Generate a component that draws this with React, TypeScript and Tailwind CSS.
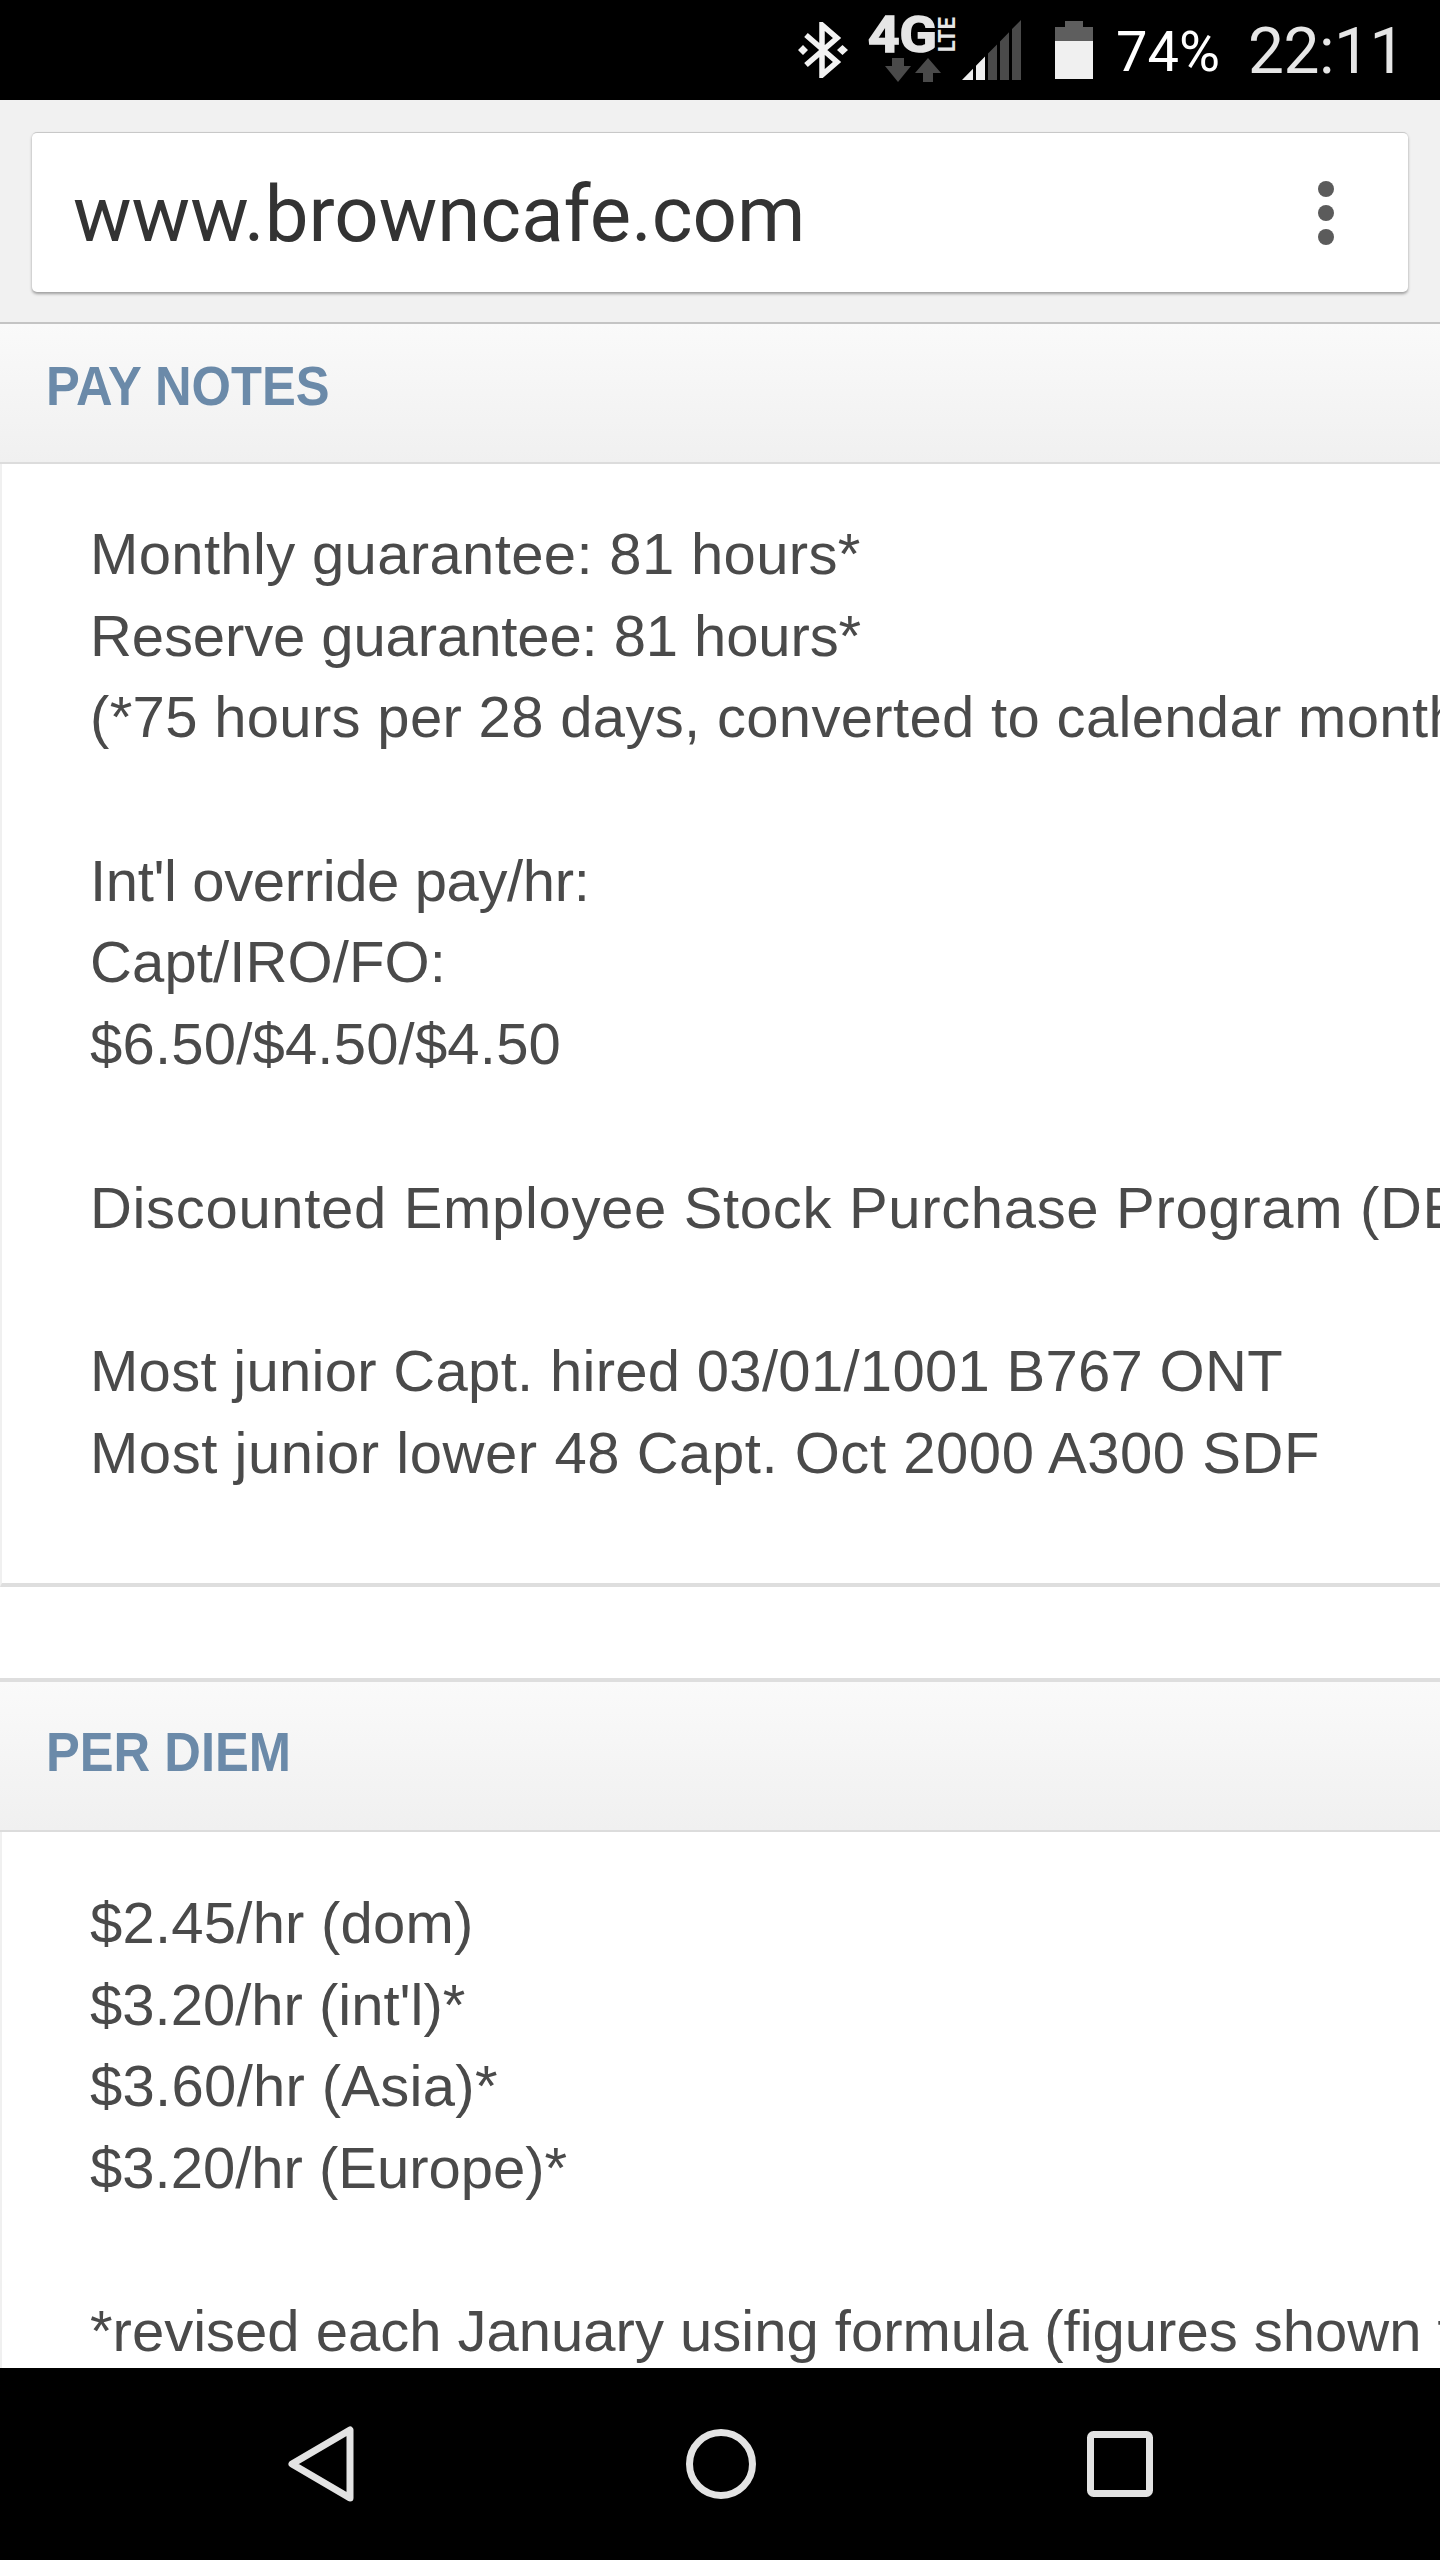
type Line = { text: string; track?: string };

function Bluetooth() {
  return (
    <svg width="50" height="56" viewBox="0 0 50 56" fill="none">
      <path d="M8 13 L39 40 L24 53 V3 L39 16 L8 43" stroke="#f2f2f2" strokeWidth="5.5" />
      <path d="M0 28 L5 23 L10 28 L5 33 Z M39 28 L44.5 23 L50 28 L44.5 33 Z" fill="#f2f2f2" />
    </svg>
  );
}

function NetworkIcon() {
  return (
    <svg width="92" height="80" viewBox="0 -12 92 80">
      <text x="0" y="37" fontFamily="Roboto, sans-serif" fontWeight="700" fontSize="50" fill="#e6e6e6" stroke="#e6e6e6" strokeWidth="1.5" textLength="69" lengthAdjust="spacingAndGlyphs">4G</text>
      <text transform="translate(87 37) rotate(-90)" x="0" y="0" fontFamily="Roboto, sans-serif" fontWeight="700" fontSize="23" fill="#e6e6e6" textLength="35" lengthAdjust="spacingAndGlyphs">LTE</text>
      <path d="M24 43 H36 V51 H43 L30 67 L17 51 H24 Z" fill="#4a4a4a" />
      <path d="M60 43 L73 58 H65 V67 H55 V58 H47 Z" fill="#4a4a4a" />
    </svg>
  );
}

function Signal() {
  return (
    <svg width="59" height="60" viewBox="0 0 59 60">
      <path d="M0 60 L11 48.8 V60 Z M14 45.8 L23 36.6 V60 H14 Z" fill="#f0f0f0" />
      <path d="M26 33.5 L35 24.4 V60 H26 Z M38 21.4 L47 12.2 V60 H38 Z M50 9.1 L59 0 V60 H50 Z" fill="#4a4a4a" />
    </svg>
  );
}

function Battery() {
  return (
    <svg width="38" height="58" viewBox="0 0 38 58">
      <path d="M10 0 H28 V6 H38 V20 H0 V6 H10 Z" fill="#5e5e5e" />
      <rect x="0" y="20" width="38" height="38" fill="#f0f0f0" />
    </svg>
  );
}

function StatusBar() {
  return (
    <div className="flex h-[100px] shrink-0 items-center bg-black pl-[798px]">
      <Bluetooth />
      <div className="ml-5 mt-[-14px]"><NetworkIcon /></div>
      <div className="ml-[2px]"><Signal /></div>
      <div className="ml-[34px]"><Battery /></div>
      <span className="ml-[23px] mt-1 font-['Roboto',sans-serif] text-[56px] leading-none text-white">74%</span>
      <span className="ml-[28px] mt-1 font-['Roboto',sans-serif] text-[64px] leading-none tracking-[-0.5px] text-[#e6e6e6]">22:11</span>
    </div>
  );
}

function Toolbar() {
  return (
    <div className="flex h-[224px] shrink-0 items-start border-b-2 border-[#c4c4c4] bg-[#f1f1f1] px-8 pt-8">
      <div className="flex h-[160px] w-full items-center justify-between rounded-[5px] border-t border-[#c8c8c8] bg-white pl-[41px] pr-[74px] shadow-[0_2px_3px_rgba(0,0,0,0.35)]">
        <span className="pt-[3px] font-['Roboto',sans-serif] text-[78px] text-[#333333]">www.browncafe.com</span>
        <div className="flex flex-col gap-2">
          <span className="h-4 w-4 rounded-full bg-[#5b5b5b]" />
          <span className="h-4 w-4 rounded-full bg-[#5b5b5b]" />
          <span className="h-4 w-4 rounded-full bg-[#5b5b5b]" />
        </div>
      </div>
    </div>
  );
}

function SectionHeader({ title, size }: { title: string; size: string }) {
  return (
    <div className={`flex ${size} shrink-0 items-center border-b-2 border-[#dcdcdc] bg-gradient-to-b from-[#fafafa] to-[#f0f0f0] pl-[46px]`}>
      <h2 className="origin-left scale-x-[0.905] font-['Liberation_Sans',Arial,sans-serif] text-[56px] font-bold text-[#6b8aa9]">{title}</h2>
    </div>
  );
}

function TextLines({ lines }: { lines: Line[] }) {
  return (
    <div className="whitespace-pre pl-[88px] font-['Liberation_Sans',Arial,sans-serif] text-[58px] leading-[81.7px] text-[#4a4a4a]">
      {lines.map((line, i) => (
        <div key={i} className={`h-[81.7px] ${line.track ?? ""}`}>{line.text}</div>
      ))}
    </div>
  );
}

function NavBar() {
  return (
    <div className="flex h-[192px] shrink-0 items-center justify-between bg-black pl-[288px] pr-[287px]">
      <svg width="66" height="76" viewBox="0 0 66 76" fill="none">
        <path d="M62 4 V72 L4 38 Z" stroke="#e3e3e3" strokeWidth="7" strokeLinejoin="round" />
      </svg>
      <svg width="70" height="70" viewBox="0 0 70 70" fill="none">
        <circle cx="35" cy="35" r="31.5" stroke="#e3e3e3" strokeWidth="7" />
      </svg>
      <svg width="66" height="66" viewBox="0 0 66 66" fill="none">
        <rect x="3.5" y="3.5" width="59" height="59" rx="3" stroke="#e3e3e3" strokeWidth="7" />
      </svg>
    </div>
  );
}

export default function App() {
  return (
    <div className="flex h-[2560px] w-[1440px] flex-col overflow-hidden bg-white">
      <StatusBar />
      <Toolbar />
      <SectionHeader title="PAY NOTES" size="h-[140px] pb-[14px]" />
      <div className="h-[1123px] shrink-0 overflow-hidden border-b-4 border-l-2 border-b-[#dedede] border-l-[#f0f0f0] pt-[49px]">
        <TextLines
          lines={[
            { text: "Monthly guarantee: 81 hours*", track: "tracking-[0.35px]" },
            { text: "Reserve guarantee: 81 hours*", track: "tracking-[-0.1px]" },
            { text: "(*75 hours per 28 days, converted to calendar monthly)", track: "tracking-[0.33px]" },
            { text: " " },
            { text: "Int'l override pay/hr:", track: "tracking-[-0.37px]" },
            { text: "Capt/IRO/FO:", track: "tracking-[0.13px]" },
            { text: "$6.50/$4.50/$4.50", track: "tracking-[0.2px]" },
            { text: " " },
            { text: "Discounted Employee Stock Purchase Program (DESPP)", track: "tracking-[0.67px]" },
            { text: " " },
            { text: "Most junior Capt. hired 03/01/1001 B767 ONT", track: "tracking-[0.3px]" },
            { text: "Most junior lower 48 Capt. Oct 2000 A300 SDF", track: "tracking-[0.55px]" },
          ]}
        />
      </div>
      <div className="h-[95px] shrink-0 border-b-4 border-[#dedede] bg-white" />
      <SectionHeader title="PER DIEM" size="h-[150px] pb-2" />
      <div className="min-h-0 flex-1 overflow-hidden border-l-2 border-[#f0f0f0] pt-[50px]">
        <TextLines
          lines={[
            { text: "$2.45/hr (dom)", track: "tracking-[0.23px]" },
            { text: "$3.20/hr (int'l)*" },
            { text: "$3.60/hr (Asia)*", track: "tracking-[0.3px]" },
            { text: "$3.20/hr (Europe)*" },
            { text: " " },
            { text: "*revised each January using formula (figures shown for 2016)" },
          ]}
        />
      </div>
      <NavBar />
    </div>
  );
}
